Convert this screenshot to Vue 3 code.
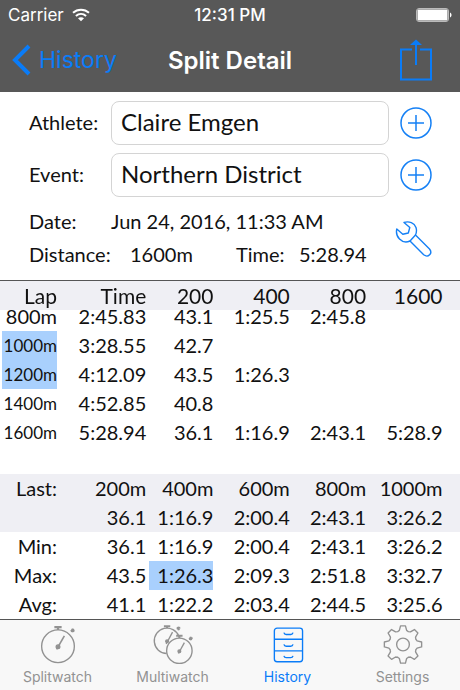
<template>
  <div class="screen">
    <header class="top-bar">
      <div class="status-bar">
        <span class="carrier">
          Carrier
          <svg class="wifi" width="18" height="14" viewBox="0 0 18 14" fill="none">
            <path d="M1 4.8C5.5 .7 12.5 .7 17 4.8" stroke="#fff" stroke-width="2"/>
            <path d="M3.9 7.9c3-2.7 7.2-2.7 10.2 0" stroke="#fff" stroke-width="2"/>
            <path d="M6 10.3c1.8-1.5 4.2-1.5 6 0L9 13.3z" fill="#fff"/>
          </svg>
        </span>
        <span class="clock">12:31 PM</span>
        <svg class="battery" width="36" height="14" viewBox="0 0 36 14">
          <rect x=".5" y=".5" width="32" height="13" rx="2.5" fill="none" stroke="#bbb"/>
          <rect x="1.5" y="1.5" width="30" height="11" rx="1" fill="#fff"/>
          <path d="M34 4.5c2 .8 2 4.2 0 5z" fill="#fff"/>
        </svg>
      </div>
      <nav class="nav-bar">
        <button class="back-btn">
          <svg width="19" height="32" viewBox="0 0 19 32" fill="none"><path d="M17 2 3 16l14 14" stroke="#0a7cf8" stroke-width="4"/></svg>
          History
        </button>
        <h1>Split Detail</h1>
        <button class="share-btn" aria-label="Share">
          <svg width="32" height="42" viewBox="0 0 32 42" fill="none" stroke="#0a7cf8">
            <path d="M12 10.5H1v30h30v-30H20" stroke-width="2"/>
            <path d="M16 26V4" stroke-width="2"/>
            <path d="M16 .5 22 6H10z" fill="#0a7cf8" stroke="none"/>
          </svg>
        </button>
      </nav>
    </header>

    <section class="details">
      <div class="field-row">
        <label for="athlete">Athlete:</label>
        <input id="athlete" v-model="athlete" type="text" />
        <button class="icon-btn" aria-label="Add athlete">
          <svg width="32" height="32" viewBox="0 0 32 32" fill="none" stroke="#1580f5"><circle cx="16" cy="16" r="15" stroke-width="1.5"/><path d="M16 8v16M8 16h16" stroke-width="1.5"/></svg>
        </button>
      </div>
      <div class="field-row">
        <label for="event">Event:</label>
        <input id="event" v-model="event" type="text" />
        <button class="icon-btn" aria-label="Add event">
          <svg width="32" height="32" viewBox="0 0 32 32" fill="none" stroke="#1580f5"><circle cx="16" cy="16" r="15" stroke-width="1.5"/><path d="M16 8v16M8 16h16" stroke-width="1.5"/></svg>
        </button>
      </div>
      <div class="info">
        <div class="info-lines">
          <div class="info-row">
            <span class="date-label">Date:</span>
            <span>Jun 24, 2016, 11:33 AM</span>
          </div>
          <div class="info-row">
            <span class="distance-label">Distance:</span>
            <span class="distance">1600m</span>
            <span class="time-label">Time:</span>
            <span>5:28.94</span>
          </div>
        </div>
        <button class="icon-btn" aria-label="Edit splits">
          <svg width="38" height="40" viewBox="-2 -3 38 40" fill="none" stroke="#1580f5" stroke-width="1.4" stroke-linejoin="round">
            <path d="M8 1.500C13 -.2 18.500 2 20 6.500c.8 2.500 .6 5-.5 7.500L33.500 28c3.500 4.300-1.300 9.300-5.800 5.800L14 20c-3.500 1.500-7.800 .8-10.500-2C.8 15.300 0 11.500 .8 8l6 5.200 5.500-1.200 1.500-5.500z"/>
            <path d="M19.500 14 14 20"/>
          </svg>
        </button>
      </div>
    </section>

    <div ref="lapScroller" class="lap-scroller">
      <table class="times laps">
        <thead>
          <tr>
            <th v-for="head in lapHeads" :key="head">{{ head }}</th>
            <th class="edge"></th>
          </tr>
        </thead>
        <tbody>
          <tr v-for="lap in laps" :key="lap[0]">
            <td v-for="(value, i) in lap" :key="i">
              <span v-if="i === 0" class="lap-name" :class="{ marked: markedLaps.includes(value), long: value.length > 4 }">{{ value }}</span>
              <template v-else>{{ value }}</template>
            </td>
            <td class="edge"></td>
          </tr>
        </tbody>
      </table>
    </div>

    <table class="times summary">
      <tbody>
        <tr v-for="(row, r) in summary" :key="r" :class="{ shaded: r < 2 }">
          <th scope="row">{{ row.label }}</th>
          <td v-for="(value, i) in row.values" :key="i">
            <span v-if="row.marked === i" class="marked-value">{{ value }}</span>
            <template v-else>{{ value }}</template>
          </td>
          <td class="edge"></td>
        </tr>
      </tbody>
    </table>

    <nav class="tab-bar">
      <button v-for="tab in tabs" :key="tab" class="tab" :class="{ active: tab === activeTab }" @click="activeTab = tab">
        <svg width="44" height="44" viewBox="0 0 44 44" fill="none" stroke="currentColor" stroke-width="1.5">
          <template v-if="tab === 'Splitwatch'">
            <circle cx="22" cy="24.500" r="18"/>
            <path d="M18 3.500h8M22 3.500v3" stroke-width="2.500"/>
            <path d="m36 8 4-1.500M37.500 5l1.500 4" stroke-width="2.500"/>
            <path d="m20.500 28 8.500-15" stroke-width="1.800"/>
            <circle cx="22" cy="25" r="2" fill="currentColor"/>
          </template>
          <template v-else-if="tab === 'Multiwatch'">
            <path d="M15 32.500A14 14 0 1 1 28.500 13.500"/>
            <path d="M12 2.500h7M15.500 2.500v2" stroke-width="2.200"/>
            <path d="m26 5 4-1M27.500 3l1 4" stroke-width="2.200"/>
            <path d="m14.500 22 7-13"/>
            <circle cx="15.500" cy="19" r="1.500" fill="currentColor"/>
            <circle cx="29" cy="29.500" r="14"/>
            <path d="M25.500 13h7M29 13v2.500" stroke-width="2.200"/>
            <path d="m39.500 16.500 4-1M41 14l1 4" stroke-width="2.200"/>
            <path d="m28 32.500 6.500-12"/>
            <circle cx="29" cy="30" r="1.500" fill="currentColor"/>
          </template>
          <template v-else-if="tab === 'History'">
            <rect x="7" y="4.500" width="31" height="37" rx="3"/>
            <path d="M7 16.800h31M7 29.500h31"/>
            <path d="M17.500 9.500q.5 2 2.500 2h5q2 0 2.500-2M17.500 22.500q.5 2 2.500 2h5q2 0 2.500-2M17.500 35q.5 2 2.500 2h5q2 0 2.500-2"/>
          </template>
          <template v-else>
            <path :d="gearPath" stroke-linejoin="round"/>
            <circle cx="22" cy="22.500" r="7"/>
          </template>
        </svg>
        <span>{{ tab }}</span>
      </button>
    </nav>
  </div>
</template>

<script setup>
import { ref, onMounted } from 'vue'

const athlete = ref('Claire Emgen')
const event = ref('Northern District')
const activeTab = ref('History')
const lapScroller = ref(null)

const tabs = ['Splitwatch', 'Multiwatch', 'History', 'Settings']
const lapHeads = ['Lap', 'Time', '200', '400', '800', '1600']
const laps = [
  ['800m', '2:45.83', '43.1', '1:25.5', '2:45.8', ''],
  ['1000m', '3:28.55', '42.7', '', '', ''],
  ['1200m', '4:12.09', '43.5', '1:26.3', '', ''],
  ['1400m', '4:52.85', '40.8', '', '', ''],
  ['1600m', '5:28.94', '36.1', '1:16.9', '2:43.1', '5:28.9']
]
const markedLaps = ['1000m', '1200m']
const summary = [
  { label: 'Last:', values: ['200m', '400m', '600m', '800m', '1000m'] },
  { label: '', values: ['36.1', '1:16.9', '2:00.4', '2:43.1', '3:26.2'] },
  { label: 'Min:', values: ['36.1', '1:16.9', '2:00.4', '2:43.1', '3:26.2'] },
  { label: 'Max:', values: ['43.5', '1:26.3', '2:09.3', '2:51.8', '3:32.7'], marked: 1 },
  { label: 'Avg:', values: ['41.1', '1:22.2', '2:03.4', '2:44.5', '3:25.6'] }
]

// One tooth pointing up, repeated every 45 degrees
const tooth = [[-6, -14], [-4, -15.5], [-2.7, -20.5], [2.7, -20.5], [4, -15.5], [6, -14]]
const gearPoints = []
for (let k = 0; k < 8; k++) {
  const a = (k * Math.PI) / 4
  for (const [x, y] of tooth) {
    const px = 22 + x * Math.cos(a) - y * Math.sin(a)
    const py = 22.5 + x * Math.sin(a) + y * Math.cos(a)
    gearPoints.push(`${px.toFixed(2)} ${py.toFixed(2)}`)
  }
}
const gearPath = `M${gearPoints.join('L')}Z`

// Show the latest laps first
onMounted(() => {
  lapScroller.value.scrollTop = lapScroller.value.scrollHeight
})
</script>

<style>
body {
  background: #fff;
}
</style>

<style scoped>
.screen {
  height: 100vh;
  display: flex;
  flex-direction: column;
  font-family: Lato, "Liberation Sans", sans-serif;
  font-size: 20px;
  color: #111;
  background: #fff;
}
button {
  background: none;
  border: none;
  padding: 0;
  font-family: inherit;
  cursor: pointer;
}
svg {
  display: block;
}
.top-bar {
  background: #585858;
  color: #fff;
  font-family: Inter, "Liberation Sans", sans-serif;
}
.status-bar {
  height: 30px;
  display: grid;
  grid-template-columns: 1fr auto 1fr;
  align-items: center;
  padding: 0 8px;
  font-size: 17px;
}
.carrier {
  display: flex;
  align-items: center;
  gap: 8px;
}
.clock {
  font-weight: 500;
}
.battery {
  justify-self: end;
}
.nav-bar {
  height: 62px;
  box-sizing: border-box;
  display: grid;
  grid-template-columns: 1fr auto 1fr;
  align-items: center;
  padding: 0 12px 2px;
}
.back-btn {
  display: flex;
  align-items: center;
  gap: 8px;
  color: #0a7cf8;
  font-size: 23px;
}
.nav-bar h1 {
  margin: 0;
  font-size: 24px;
  font-weight: 600;
}
.share-btn {
  justify-self: end;
  margin-right: 16px;
}
.details {
  padding: 9px 28px 0 29px;
}
.field-row {
  display: flex;
  align-items: center;
  margin-bottom: 8px;
}
.field-row label {
  width: 82px;
  padding-bottom: 2px;
}
.field-row input {
  flex: 1;
  min-width: 0;
  height: 44px;
  box-sizing: border-box;
  padding: 0 9px 4px;
  margin-right: 11px;
  border: 1px solid #d4d4d4;
  border-radius: 8px;
  background: #fff;
  color: #111;
  font-family: inherit;
  font-size: 24px;
  outline: none;
}
.info {
  display: flex;
  align-items: center;
  justify-content: space-between;
  padding-bottom: 9px;
}
.info-row {
  display: flex;
  align-items: center;
  height: 33px;
  box-sizing: border-box;
  padding-bottom: 2px;
  white-space: nowrap;
}
.date-label {
  width: 82px;
}
.distance-label {
  width: 101px;
}
.distance {
  width: 106px;
}
.time-label {
  width: 63px;
}
.lap-scroller {
  flex: 1;
  min-height: 0;
  overflow-y: auto;
  scrollbar-width: none;
  border-top: 1px solid #555;
}
.times {
  width: 100%;
  table-layout: fixed;
  border-collapse: separate;
  border-spacing: 0;
  line-height: 29px;
}
.times th,
.times td {
  height: 29px;
  padding: 0;
  text-align: right;
  font-weight: 400;
  white-space: nowrap;
}
.times tr > :nth-child(1) {
  width: 12.4%;
}
.times tr > :nth-child(2) {
  width: 19.4%;
}
.times tr > :nth-child(3) {
  width: 14.6%;
}
.times tr > :nth-child(4),
.times tr > :nth-child(5),
.times tr > :nth-child(6) {
  width: 16.6%;
}
.laps {
  padding-bottom: 27px;
}
.laps thead th {
  position: sticky;
  top: 0;
  background: #efeff4;
  font-size: 21px;
}
.lap-name {
  display: block;
  height: 29px;
  margin-left: 2px;
}
.lap-name.long {
  font-size: 17px;
}
.marked,
.marked-value {
  background: #a9d0fd;
}
.marked-value {
  display: block;
  height: 29px;
  margin-left: 3px;
}
.shaded {
  background: #efeff4;
}
.tab-bar {
  box-sizing: border-box;
  height: 71px;
  display: flex;
  border-top: 1px solid #555;
  background: #f8f8f8;
  font-family: Inter, "Liberation Sans", sans-serif;
}
.tab {
  flex: 1;
  display: flex;
  flex-direction: column;
  align-items: center;
  padding-top: 4px;
  color: #929292;
  font-family: inherit;
  font-size: 14px;
  line-height: 26px;
}
.tab.active {
  color: #0a7cf8;
}
</style>
